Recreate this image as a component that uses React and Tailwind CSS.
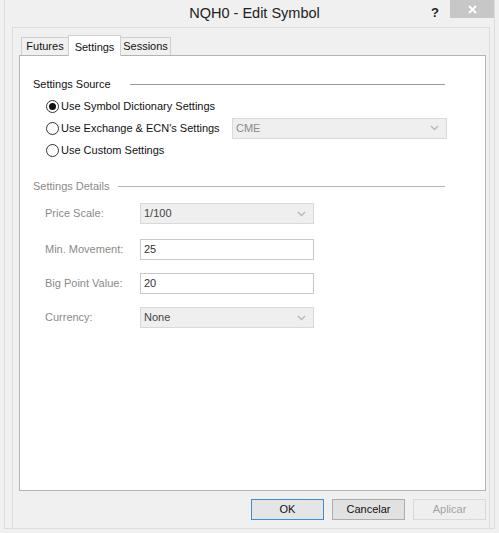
import React from "react"

const font = { fontFamily: '"Liberation Sans", Arial, sans-serif' }

function Chevron() {
  return (
    <svg width="9" height="6" viewBox="0 0 9 6" className="shrink-0">
      <polyline points="1,1 4.5,4.5 8,1" fill="none" stroke="#b8b8b8" strokeWidth="1.4" />
    </svg>
  )
}

function Combo({ value, width, muted }) {
  return (
    <div
      className={`flex h-[21px] items-center justify-between border border-[#d9d9d9] bg-[#efefef] pl-[3px] pr-[7px] text-[11px] ${muted ? "text-[#8a8a8a]" : "text-[#444]"}`}
      style={{ width }}
    >
      <span>{value}</span>
      <Chevron />
    </div>
  )
}

function Radio({ checked, label }) {
  return (
    <div className="flex items-center whitespace-nowrap">
      <span className="flex h-[13px] w-[13px] shrink-0 items-center justify-center rounded-full border border-[#333] bg-white">
        {checked && <span className="h-[7px] w-[7px] rounded-full bg-[#111]" />}
      </span>
      <span className="ml-[2px] text-[11px] text-[#111]">{label}</span>
    </div>
  )
}

function SectionHead({ title, textW, grey }) {
  return (
    <div className="flex h-[16px] items-center pl-[13px] pr-[40px]">
      <span className={`whitespace-nowrap text-[11px] ${grey ? "text-[#8a8a8a]" : "text-[#111]"}`} style={{ width: textW }}>
        {title}
      </span>
      <div className={`h-px flex-1 ${grey ? "bg-[#b5b5b5]" : "bg-[#9a9a9a]"}`} />
    </div>
  )
}

function Field({ label, children, mt }) {
  return (
    <div className={`flex h-[21px] items-center pl-[25px] ${mt}`}>
      <span className="w-[95px] whitespace-nowrap text-[11px] text-[#8a8a8a]">{label}</span>
      {children}
    </div>
  )
}

function Input({ value }) {
  return (
    <div className="flex h-[21px] w-[174px] items-center border border-[#c9c9c9] bg-white pl-[3px] text-[11px] text-[#333]">
      {value}
    </div>
  )
}

export default function App() {
  return (
    <div className="h-[533px] w-[499px] overflow-hidden bg-[#f0f0f0]" style={font}>
      <div className="ml-[4px] h-[529px] w-[491px] border-x border-b border-[#dcdcdc]">
        {/* title bar */}
        <div className="relative flex h-[27px] items-center justify-center">
          <span className="ml-[10px] text-[14.5px] text-[#222]">NQH0 - Edit Symbol</span>
          <span className="absolute left-[426px] top-[3px] text-[13px] font-bold text-[#222]">?</span>
          <div className="absolute right-[0px] top-0 flex h-[18px] w-[44px] items-center justify-center bg-[#c7c7c7]">
            <svg width="9" height="9" viewBox="0 0 9 9">
              <path d="M1 1 L8 8 M8 1 L1 8" stroke="#fff" strokeWidth="1.8" />
            </svg>
          </div>
        </div>

        {/* client area */}
        <div className="ml-[7px] h-[501px] w-[478px] border-x border-t border-[#dcdcdc]">
          <div className="ml-[8px] mt-[7px] flex h-[20px] items-end text-[11px] text-[#111]">
            <div className="flex h-[18px] w-[47px] items-center justify-center border-l border-t border-[#cfcfcf] bg-[#f0f0f0]">
              Futures
            </div>
            <div className="relative z-10 -mb-px flex h-[21px] w-[53px] items-start justify-center border-x border-t border-[#cfcfcf] bg-white pt-[3px]">
              Settings
            </div>
            <div className="flex h-[18px] w-[50px] items-center justify-center border-r border-t border-[#cfcfcf] bg-[#f0f0f0]">
              Sessions
            </div>
          </div>

          <div className="ml-[6px] h-[436px] w-[467px] border border-[#b4b4b4] bg-white pt-[20px]">
            <SectionHead title="Settings Source" textW={97} />
            <div className="mt-[3px] pl-[26px]">
              <div className="flex h-[22px] items-center">
                <Radio checked label="Use Symbol Dictionary Settings" />
              </div>
              <div className="flex h-[22px] items-center">
                <div className="w-[186px]">
                  <Radio label="Use Exchange & ECN's Settings" />
                </div>
                <Combo value="CME" width={215} muted />
              </div>
              <div className="flex h-[22px] items-center">
                <Radio label="Use Custom Settings" />
              </div>
            </div>

            <div className="mt-[17px]">
              <SectionHead title="Settings Details" textW={85} grey />
            </div>

            <Field label="Price Scale:" mt="mt-[9px]">
              <Combo value="1/100" width={174} />
            </Field>
            <Field label="Min. Movement:" mt="mt-[15px]">
              <Input value="25" />
            </Field>
            <Field label="Big Point Value:" mt="mt-[13px]">
              <Input value="20" />
            </Field>
            <Field label="Currency:" mt="mt-[13px]">
              <Combo value="None" width={174} />
            </Field>
          </div>

          <div className="ml-[6px] mt-[8px] flex w-[467px] justify-end gap-[8px] text-[11px]">
            <button className="h-[21px] w-[73px] border border-[#3c8fd6] bg-[#e5e5e5] text-[#111]">OK</button>
            <button className="h-[21px] w-[73px] border border-[#adadad] bg-[#e1e1e1] text-[#111]">Cancelar</button>
            <button className="h-[21px] w-[73px] border border-[#d9d9d9] bg-[#efefef] text-[#a3a3a3]">Aplicar</button>
          </div>
        </div>
      </div>
    </div>
  )
}
